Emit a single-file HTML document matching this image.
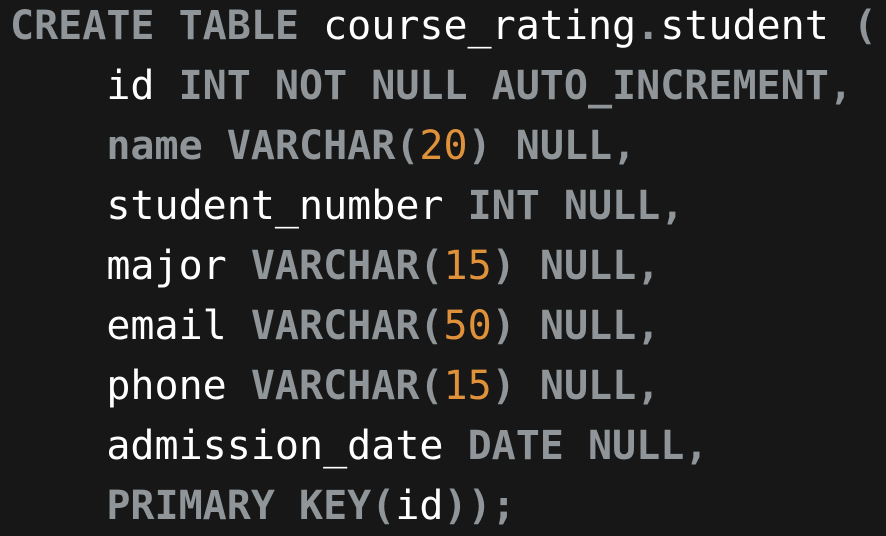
<!DOCTYPE html>
<html><head><style>
html,body{margin:0;padding:0;background:#171717;width:886px;height:536px;overflow:hidden}
pre{margin:0;position:absolute;left:10px;top:-4px;font-family:"DejaVu Sans Mono","Liberation Mono",monospace;font-size:40px;line-height:60px;color:#ffffff;white-space:pre}
.k{color:#8f9598;font-weight:bold}
.p{color:#8f9598;font-weight:bold}
.n{color:#e0923a}
</style></head><body>
<pre><span class="k">CREATE TABLE</span> course_rating<span class="p">.</span>student <span class="p">(</span>
    id <span class="k">INT NOT NULL AUTO_INCREMENT</span><span class="p">,</span>
    <span class="k">name VARCHAR</span><span class="p">(</span><span class="n">20</span><span class="p">)</span> <span class="k">NULL</span><span class="p">,</span>
    student_number <span class="k">INT NULL</span><span class="p">,</span>
    major <span class="k">VARCHAR</span><span class="p">(</span><span class="n">15</span><span class="p">)</span> <span class="k">NULL</span><span class="p">,</span>
    email <span class="k">VARCHAR</span><span class="p">(</span><span class="n">50</span><span class="p">)</span> <span class="k">NULL</span><span class="p">,</span>
    phone <span class="k">VARCHAR</span><span class="p">(</span><span class="n">15</span><span class="p">)</span> <span class="k">NULL</span><span class="p">,</span>
    admission_date <span class="k">DATE NULL</span><span class="p">,</span>
    <span class="k">PRIMARY KEY</span><span class="p">(</span>id<span class="p">));</span></pre>
</body></html>
